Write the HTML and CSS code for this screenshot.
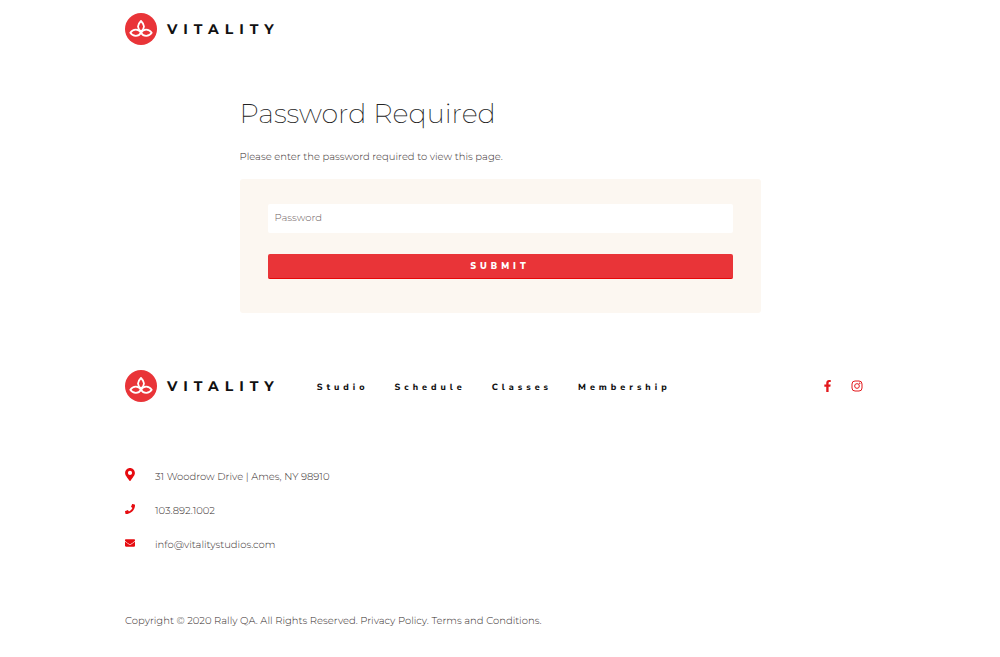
FILE: index.html
```html
<!DOCTYPE html>
<html lang="en">
<head>
<meta charset="utf-8">
<meta name="viewport" content="width=device-width, initial-scale=1">
<title>Password Required – Vitality</title>
<link rel="stylesheet" href="styles.css">
</head>
<body>
<svg class="sprite" aria-hidden="true">
  <symbol id="lotus" viewBox="0 0 32 32">
    <circle cx="16" cy="16" r="16" fill="#e93438"/>
    <g fill="none" stroke="#fff" stroke-width="1.8" stroke-linejoin="round">
      <path d="M16 8c-4 4-4 7 0 10.500c4-3.500 4-6.500 0-10.500z"/>
      <path d="M16 19.700c-2.500-4.300-8-4-10.700 0c2.700 4 8.200 4.300 10.700 0z"/>
      <path d="M16 19.700c2.500-4.300 8-4 10.700 0c-2.700 4-8.200 4.300-10.700 0z"/>
    </g>
  </symbol>
</svg>

<header class="container site-header">
  <a class="brand" href="#"><svg class="brand-mark" aria-hidden="true"><use href="#lotus"/></svg><span class="brand-name">VITALITY</span></a>
</header>

<main class="gate">
  <h1 class="gate-title">Password Required</h1>
  <p class="gate-text">Please enter the password required to view this page.</p>
  <form class="gate-form">
    <input class="field" type="password" placeholder="Password" aria-label="Password">
    <button class="submit" type="submit">SUBMIT</button>
  </form>
</main>

<footer class="container site-footer">
  <div class="footer-bar">
    <a class="brand" href="#"><svg class="brand-mark" aria-hidden="true"><use href="#lotus"/></svg><span class="brand-name">VITALITY</span></a>
    <nav class="nav">
      <a href="#">Studio</a>
      <a href="#">Schedule</a>
      <a href="#">Classes</a>
      <a href="#">Membership</a>
    </nav>
    <div class="social">
      <a href="#" aria-label="Facebook"><svg class="icon-facebook" viewBox="22 0 272 512"><path d="M279.140 288l14.220-92.660h-88.910v-60.130c0-25.350 12.420-50.060 52.240-50.060h40.420V6.260S260.430 0 225.360 0c-73.220 0-121.080 44.380-121.080 124.720v70.620H22.890V288h81.390v224h100.170V288z"/></svg></a>
      <a href="#" aria-label="Instagram"><svg class="icon-instagram" viewBox="0 0 24 24"><rect x="2" y="2" width="20" height="20" rx="6"/><circle cx="12" cy="12" r="4.700"/><circle cx="17.500" cy="6.500" r=".8"/></svg></a>
    </div>
  </div>

  <address class="contact">
    <div class="contact-row"><svg class="icon-pin" viewBox="0 0 384 512" aria-hidden="true"><path d="M172.270 501.670C26.970 291.030 0 269.410 0 192 0 85.960 85.960 0 192 0s192 85.960 192 192c0 77.410-26.970 99.030-172.270 309.670-9.530 13.770-29.930 13.770-39.460 0zM192 272c44.180 0 80-35.820 80-80s-35.820-80-80-80-80 35.820-80 80 35.820 80 80 80z"/></svg><span>31 Woodrow Drive | Ames, NY 98910</span></div>
    <div class="contact-row"><svg class="icon-small" viewBox="0 0 512 512" aria-hidden="true"><path d="M493.400 24.600l-104-24c-11.300-2.600-22.900 3.300-27.500 13.900l-48 112c-4.200 9.800-1.400 21.300 6.900 28l60.600 49.600c-36 76.700-98.900 140.500-177.200 177.200l-49.600-60.600c-6.800-8.300-18.200-11.100-28-6.900l-112 48C3.900 366.500-2 378.100.6 389.400l24 104C27.100 504.200 36.700 512 48 512c256.100 0 464-207.500 464-464 0-11.200-7.700-20.900-18.600-23.400z"/></svg><a href="tel:1038921002">103.892.1002</a></div>
    <div class="contact-row"><svg class="icon-small" viewBox="0 0 512 512" aria-hidden="true"><path d="M502.300 190.800c3.900-3.100 9.700-.2 9.700 4.700V400c0 26.500-21.500 48-48 48H48c-26.500 0-48-21.500-48-48V195.600c0-5 5.700-7.800 9.700-4.700 22.400 17.400 52.100 39.500 154.100 113.600 21.100 15.400 56.700 47.800 92.200 47.600 35.700.3 72-32.800 92.300-47.600 102-74.100 131.600-96.300 154-113.700zM256 320c23.200.4 56.600-29.200 73.400-41.400 132.700-96.300 142.800-104.700 173.400-128.700 5.800-4.500 9.200-11.500 9.200-18.900v-19c0-26.500-21.500-48-48-48H48c-26.500 0-48 21.500-48 48v19c0 7.400 3.400 14.300 9.200 18.900 30.600 23.900 40.700 32.400 173.400 128.700 16.800 12.200 50.200 41.800 73.400 41.400z"/></svg><a href="mailto:info@vitalitystudios.com">info@vitalitystudios.com</a></div>
  </address>

  <p class="legal">Copyright © 2020 Rally QA. All Rights Reserved. <a href="#">Privacy Policy.</a> <a href="#">Terms and Conditions.</a></p>
</footer>
</body>
</html>
```
FILE: styles.css
```css
* {
  box-sizing: border-box;
}

body {
  margin: 0;
  background: #fff;
  color: #332b2b;
  font: 300 10px/18px Montserrat, Inter, "Open Sans", sans-serif;
  text-rendering: geometricPrecision;
}

a {
  color: inherit;
  text-decoration: none;
}

h1,
p {
  margin: 0;
}

.sprite {
  position: absolute;
  width: 0;
  height: 0;
}

.container {
  max-width: 782px;
  margin: 0 auto;
  padding: 0 16px;
}

.site-header {
  padding-top: 13px;
}

.brand {
  display: flex;
  align-items: center;
  gap: 10px;
}

.brand-mark {
  width: 32px;
  height: 32px;
}

.brand-name {
  color: #111;
  font: 700 14px/32px Montserrat, Lato, sans-serif;
  letter-spacing: 6px;
}

.gate {
  max-width: 553px;
  margin: 0 auto;
  padding: 48px 16px 0;
}

.gate-title {
  color: #222;
  font-size: 27px;
  font-weight: 200;
  line-height: 42px;
}

.gate-text {
  margin-top: 13px;
}

.gate-form {
  display: flex;
  flex-direction: column;
  gap: 21px;
  margin-top: 13px;
  padding: 25px 28px 34px;
  border-radius: 3px;
  background: #fcf7f1;
}

.field {
  width: 100%;
  height: 29px;
  padding: 0 7px 2px;
  border: 0;
  border-radius: 2px;
  background: #fff;
  color: inherit;
  font: inherit;
}

.field::placeholder {
  color: #6e6060;
  opacity: 1;
}

.submit {
  height: 25px;
  padding: 1px 0 0;
  border: 0;
  border-bottom: 1px solid #e60808;
  border-radius: 2px;
  background: #e93438;
  color: #fff;
  font: 900 9px/23px "Nunito Sans", Nunito, Inter, sans-serif;
  letter-spacing: 4px;
}

.site-footer {
  padding-top: 57px;
  padding-bottom: 28px;
}

.footer-bar {
  display: flex;
  flex-wrap: wrap;
  align-items: center;
}

.nav {
  display: flex;
  flex-wrap: wrap;
  gap: 26px;
  margin-left: 37px;
  padding-top: 4px;
  color: #111;
  font: 800 9px/18px "Nunito Sans", Nunito, "Noto Sans", sans-serif;
  letter-spacing: 4px;
}

.social {
  display: flex;
  align-items: center;
  gap: 20px;
  margin-left: auto;
  padding-right: 12px;
}

.social a {
  display: flex;
}

.icon-facebook {
  width: 7px;
  height: 12px;
  fill: #e3191d;
}

.icon-instagram {
  width: 12px;
  height: 12px;
  fill: none;
  stroke: #e3191d;
  stroke-width: 2;
}

.contact {
  display: grid;
  gap: 16px;
  margin-top: 66px;
  font-style: normal;
}

.contact-row {
  display: grid;
  grid-template-columns: 10px 1fr;
  column-gap: 20px;
}

.contact-row svg {
  width: 10px;
  fill: #e60b10;
}

.icon-pin {
  height: 13px;
}

.icon-small {
  height: 10px;
  margin-top: 2px;
}

.legal {
  margin-top: 58px;
}
```
